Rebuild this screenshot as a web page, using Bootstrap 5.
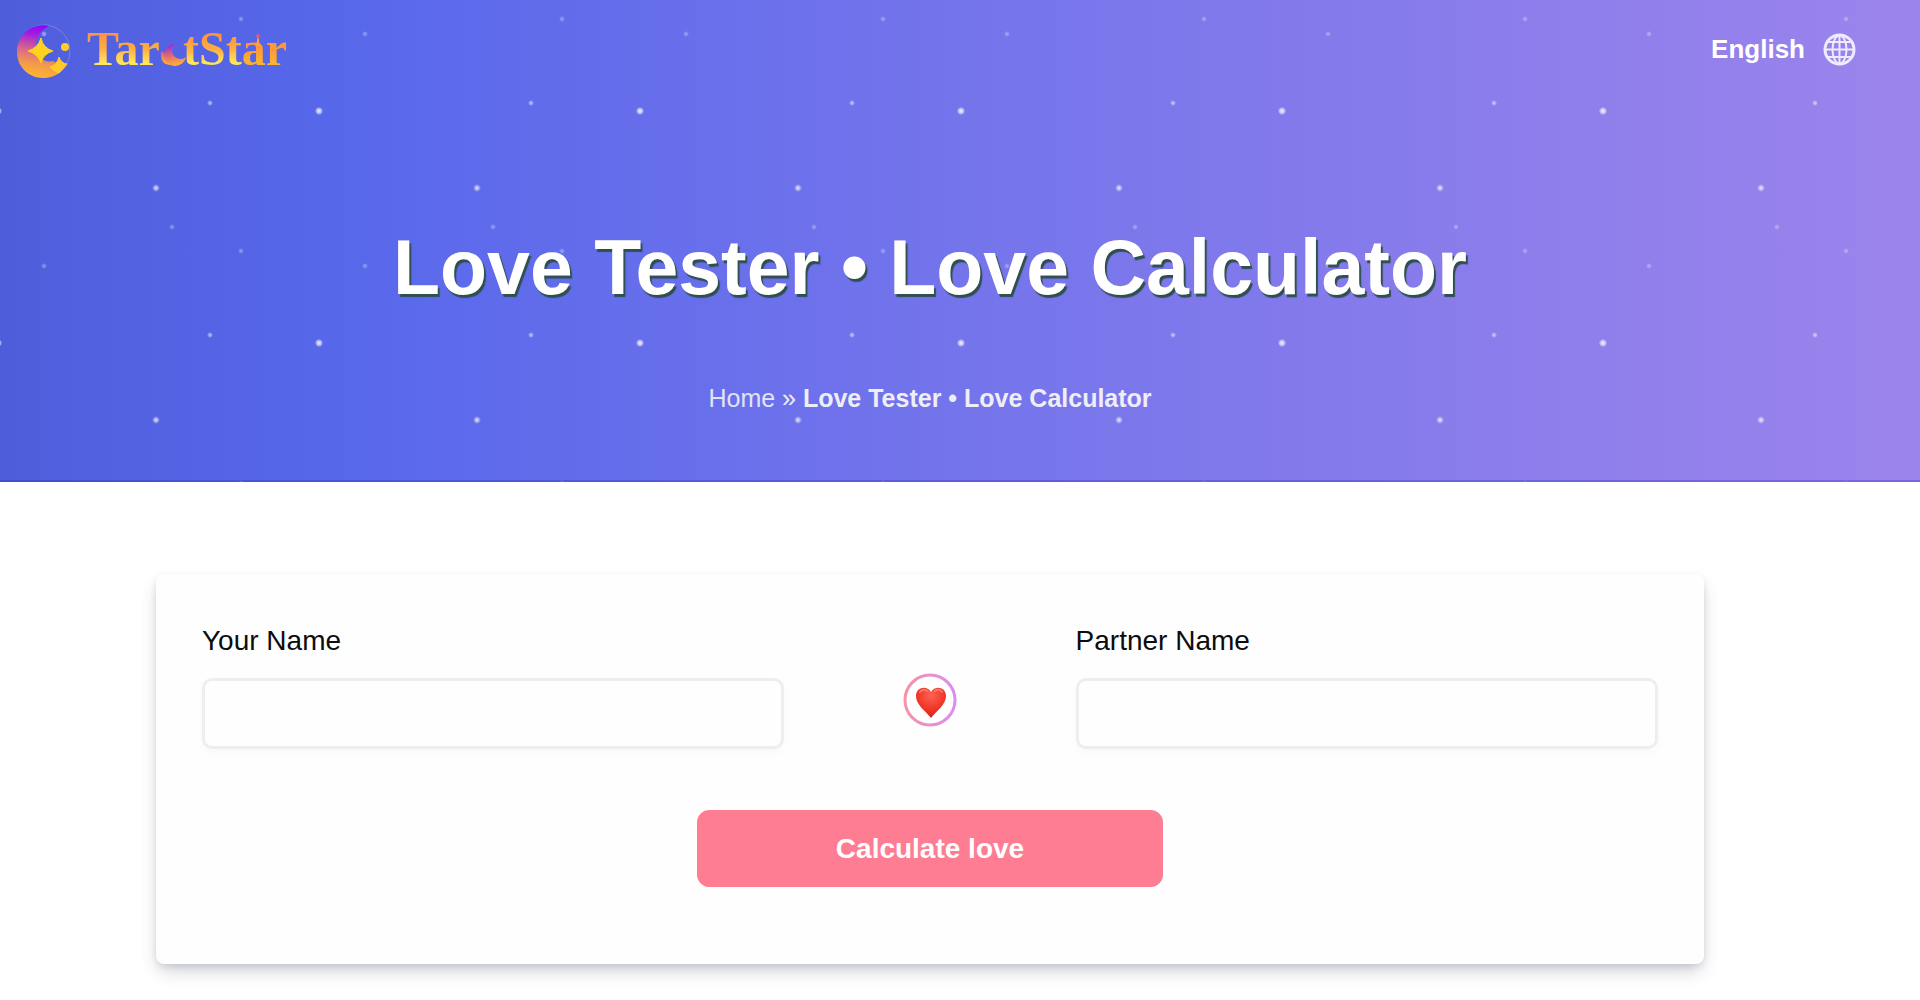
<!DOCTYPE html>
<html lang="en">
<head>
<meta charset="utf-8">
<meta name="viewport" content="width=device-width, initial-scale=1">
<title>Love Tester • Love Calculator</title>
<link rel="stylesheet" href="https://cdn.jsdelivr.net/npm/bootstrap@5.3.0/dist/css/bootstrap.min.css">
<style>
  body { font-family: "Liberation Sans", Arial, sans-serif; color: #111; background: #fff; overflow-x: hidden; }
  .starry {
    background-image:
      radial-gradient(circle at 160px 111px, rgba(255,255,255,.8) 1px, rgba(255,255,255,.4) 3px, transparent 4px),
      radial-gradient(circle at 156px 188px, rgba(255,255,255,.7) 1px, rgba(255,255,255,.2) 3px, transparent 4px),
      radial-gradient(circle at 210px 103px, rgba(255,255,255,.5) 1px, rgba(255,255,255,.25) 2px, transparent 3px),
      radial-gradient(circle at 172px 227px, rgba(255,255,255,.3) 1px, rgba(255,255,255,.15) 2px, transparent 3px),
      radial-gradient(circle at 241px 19px, rgba(255,255,255,.3) 1px, rgba(255,255,255,.15) 2px, transparent 3px),
      radial-gradient(circle at 44px 34px, rgba(255,255,255,.3) 1px, rgba(255,255,255,.15) 2px, transparent 3px),
      linear-gradient(90deg, #4e5edb 0%, #5868eb 18%, #7675eb 52%, #9c84ec 100%);
    background-size: 321px 232px, 321px 232px, 321px 232px, 321px 500px, 321px 232px, 321px 232px, 100% 100%;
    background-position: 159px 0, 0 0, 0 0, 0 0, 0 0, 0 0, 0 0;
    box-shadow: inset 0 -2px 0 rgba(40,40,180,.3);
    padding-bottom: 68px;
  }
  .topbar { padding: 19px 64px 22px 16px; }
  .wordmark { font: 700 48px/60px "Liberation Serif", "Times New Roman", serif; }
  .ink { background: linear-gradient(180deg, #ff9440 25%, #ffad40 50%, #ffe45c 76%); -webkit-background-clip: text; background-clip: text; color: transparent; }
  .ink-warm { background: linear-gradient(180deg, #ff8e4a 25%, #ff9c38 55%, #f9b32c 76%); -webkit-background-clip: text; background-clip: text; color: transparent; }
  .ink-moon { background: linear-gradient(180deg, #8a2be0 42%, #d9647f 58%, #ffa53a 76%); -webkit-background-clip: text; background-clip: text; color: transparent;
    -webkit-mask-image: linear-gradient(30deg, #000 36%, transparent 40%); mask-image: linear-gradient(30deg, #000 36%, transparent 40%); }
  .wordmark-art { position: absolute; left: 0; top: 0; overflow: visible; }
  .lang { font-size: 26px; line-height: 34px; gap: 18px; }
  .hero-title { font-size: 77px; line-height: 94px; text-shadow: 2px 3px 1px #2f4f4f; margin-top: 119px; margin-bottom: 68px; }
  .crumbs { font-size: 25px; line-height: 32px; color: #eeeef6; }
  .crumbs a { color: #e2e3f5; }
  .shift { padding-right: 60px; }
  .tester { max-width: 1548px; padding: 46px; margin-top: 92px; margin-bottom: 37px; border-radius: 8px; background: #fefefe;
    box-shadow: 0 9px 18px -3px rgba(50,54,90,.24), 0 3px 9px -2px rgba(0,0,0,.14); }
  .name-label { font-size: 28px; line-height: 42px; margin-bottom: 16px; color: #0c0c0c; }
  .name-box { height: 71px; border: 3px solid #eee; border-radius: 10px; background: #fefefe; font-size: 28px; box-shadow: 0 4px 8px rgba(0,0,0,.025); }
  .col-name { flex: 0 0 40%; }
  .heart { padding-bottom: 22px; }
  .go { width: 32%; min-width: 280px; height: 77px; border-radius: 12px; background: #ff7d93; border-color: #ff7d93; color: #fff; font-size: 28px; margin-top: 61px; margin-bottom: 31px; }
  .go:hover { background: #f96a83; color: #fff; }
</style>
</head>
<body>
<header class="starry">
  <nav class="topbar d-flex justify-content-between align-items-center">
    <a href="#" class="d-flex align-items-center text-decoration-none gap-3">
      <svg width="55" height="60" viewBox="0 -1 55 60" aria-hidden="true">
        <defs>
          <linearGradient id="moon" x1=".6" y1="0" x2=".45" y2="1">
            <stop offset="0" stop-color="#8a00ff"/><stop offset=".2" stop-color="#a21be0"/><stop offset=".5" stop-color="#d9668c"/><stop offset=".75" stop-color="#f39a4c"/><stop offset="1" stop-color="#ffb52e"/>
          </linearGradient>
        </defs>
        <circle cx="28" cy="31" r="26" fill="none" stroke="#8d86d8" stroke-width="1" opacity=".8"/>
        <path d="M33 6C17 2 1 14 1 32c0 15 12 26 26 26 11 0 20-6 25-15-5 3-11 1-15-2-9 2-16-4-17-13-1-9 4-18 13-22Z" fill="url(#moon)"/>
        <path d="M25 18q2 10 12 13-10 3-12 12-3-9-13-12 10-3 13-13Z" fill="#ffd21f" stroke="#ffd21f" stroke-width="1"/>
        <path d="M43 37q2 6 8 7-4 5-8 9-5-1-9-6 7-2 9-10Z" fill="#ffc928" stroke="#ffc928" stroke-width="1"/>
        <circle cx="49" cy="27" r="4" fill="#ffd02c"/>
        <circle cx="28" cy="14" r="2" fill="#a98df4"/>
      </svg>
      <span class="wordmark position-relative"><span class="ink">Tar</span><span class="ink-moon">o</span><span class="ink">tSt</span><span class="ink-warm">ar</span>
        <svg class="wordmark-art" width="206" height="60" viewBox="0 0 206 60" aria-hidden="true">
          <defs><linearGradient id="cres" x1="0" y1="0" x2=".2" y2="1"><stop offset="0" stop-color="#8b22e8"/><stop offset=".5" stop-color="#d9617f"/><stop offset="1" stop-color="#ffac38"/></linearGradient></defs>
          <path d="M88 25A11 11 0 1 0 99 38A8 8 0 1 1 88 25Z" fill="url(#cres)"/>
          <path d="M171 16l2 11h-4Z" fill="#ffa044"/><circle cx="171" cy="17" r="2" fill="#d8588c"/>
        </svg>
      </span>
    </a>
    <a href="#" class="lang d-flex align-items-center text-white text-decoration-none fw-bold">
      <span>English</span>
      <svg width="33" height="33" viewBox="0 0 33 33" fill="none" stroke="#efeaff" aria-hidden="true">
        <circle cx="16.500" cy="16.500" r="14.500" stroke-width="3"/>
        <ellipse cx="16.500" cy="16.500" rx="7" ry="14" stroke-width="2"/>
        <path d="M16.500 2v29M2 16.500h29M5 9h23M5 24h23" stroke-width="2"/>
      </svg>
    </a>
  </nav>
  <div class="shift text-center">
    <h1 class="hero-title fw-bold text-white">Love Tester • Love Calculator</h1>
    <div class="crumbs"><a href="#" class="text-decoration-none">Home</a> » <strong>Love Tester • Love Calculator</strong></div>
  </div>
</header>
<main class="shift">
  <form class="tester mx-auto">
    <div class="d-flex align-items-end">
      <div class="col-name">
        <label for="you" class="name-label d-block">Your Name</label>
        <input id="you" type="text" class="form-control name-box">
      </div>
      <div class="heart flex-fill d-flex justify-content-center">
        <svg width="54" height="54" viewBox="0 0 54 54" aria-hidden="true">
          <defs>
            <linearGradient id="ring"><stop offset="0" stop-color="#f991a8"/><stop offset="1" stop-color="#dc8cf2"/></linearGradient>
            <radialGradient id="red" cx=".5" cy=".25" r=".8"><stop offset="0" stop-color="#ff6350"/><stop offset=".6" stop-color="#ee3427"/><stop offset="1" stop-color="#cf2318"/></radialGradient>
          </defs>
          <circle cx="27" cy="27" r="25" fill="#fff" stroke="url(#ring)" stroke-width="3"/>
          <path d="M28 45C22 37 13 32 13 23c0-9 11-11 15-4 4-7 15-5 15 4 0 9-9 14-15 22Z" fill="url(#red)"/>
          <path d="M17 19q3-4 7-1M32 18q4-3 7 1" stroke="#ff7767" stroke-width="2" fill="none" stroke-linecap="round"/>
        </svg>
      </div>
      <div class="col-name">
        <label for="partner" class="name-label d-block">Partner Name</label>
        <input id="partner" type="text" class="form-control name-box">
      </div>
    </div>
    <button type="submit" class="btn go fw-bold d-block mx-auto">Calculate love</button>
  </form>
</main>
<script src="https://cdn.jsdelivr.net/npm/bootstrap@5.3.0/dist/js/bootstrap.bundle.min.js"></script>
</body>
</html>
